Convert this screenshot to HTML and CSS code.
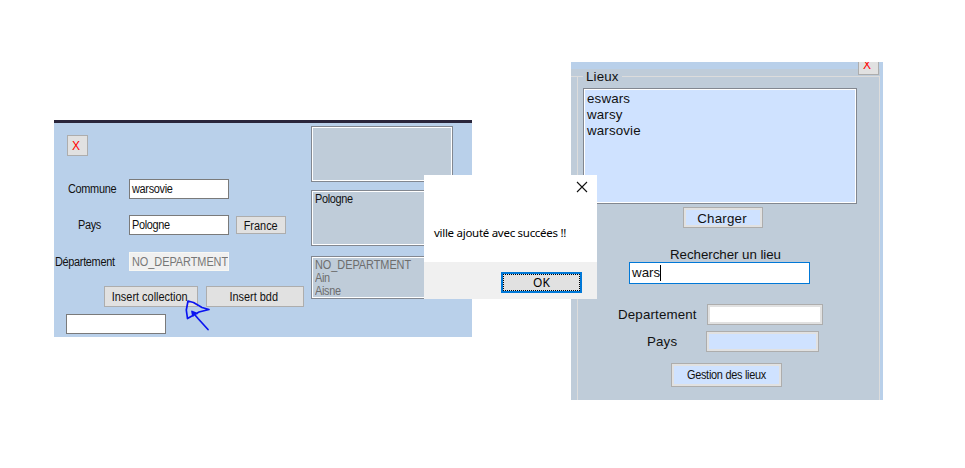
FILE: index.html
```html
<!DOCTYPE html>
<html lang="fr">
<head>
<meta charset="utf-8">
<title>Gestion des lieux</title>
<link rel="stylesheet" href="styles.css">
</head>
<body>
<main class="desktop">
  <section class="window editor">
    <div class="form">
      <button class="btn close">X</button>
      <div class="row commune"><label><span class="t">Commune</span></label><div class="field"><span class="t">warsovie</span></div></div>
      <div class="row pays"><label><span class="t">Pays</span></label><div class="field"><span class="t">Pologne</span></div><button class="btn france"><span class="t">France</span></button></div>
      <div class="row dept"><label><span class="t">Département</span></label><div class="field disabled"><span class="t caps">NO_DEPARTMENT</span></div></div>
      <div class="actions"><button class="btn collection"><span class="t">Insert collection</span></button><button class="btn bdd"><span class="t">Insert bdd</span></button></div>
      <div class="field extra"></div>
    </div>
    <div class="lists">
      <div class="list"></div>
      <div class="list"><div class="t">Pologne</div></div>
      <div class="list muted"><div class="t caps">NO_DEPARTMENT</div><div class="t">Ain</div><div class="t">Aisne</div></div>
    </div>
    <svg class="arrow" width="28" height="34" viewBox="184 298 28 34"><path d="M188 301L193.5 302.5L202 307.5L209 309.5L199 312L187.5 318.5L186.3 310L188 301M192 311.5L198 318.5L208 329.5M192 311.5L193 316M192 311.5L197 313.5"/></svg>
  </section>

  <section class="window places">
    <button class="btn close corner">X</button>
    <div class="panel">
      <fieldset class="group">
        <legend>Lieux</legend>
        <div class="results"><div>eswars</div><div>warsy</div><div>warsovie</div></div>
        <button class="flat load">Charger</button>
        <div class="search-label">Rechercher un lieu</div>
        <div class="search">wars<i class="caret"></i></div>
        <div class="info first"><span class="name">Departement</span><div class="flat value white"></div></div>
        <div class="info second"><span class="name">Pays</span><div class="flat value"></div></div>
        <button class="flat manage"><span class="t">Gestion des lieux</span></button>
      </fieldset>
    </div>
  </section>

  <section class="window dialog">
    <svg class="dismiss" width="12" height="12" viewBox="0 0 12 12"><path d="M1 1L11 11M11 1L1 11"/></svg>
    <p>ville ajouté avec succées !!</p>
    <footer><button class="ok"><span>OK</span></button></footer>
  </section>
</main>
</body>
</html>
```

FILE: styles.css
```css
* { box-sizing: border-box; }
body { margin: 0; background: #fff; font: 12px/14px "Liberation Sans", Arial, sans-serif; color: #111; }
button { font: inherit; color: inherit; padding: 0; margin: 0; border-radius: 0; white-space: nowrap; }
.desktop { position: relative; width: 965px; height: 468px; overflow: hidden; }
.window { position: absolute; }

/* Condensed interface text */
.t { display: inline-block; transform: scaleX(.91); transform-origin: left center; }
button .t { transform-origin: center; }

/* Editor window */
.editor { left: 54px; top: 120px; width: 418px; height: 217px; background: #b9d0ea; border-top: 3px solid #29253b; display: flex; letter-spacing: -0.35px; }
.form { width: 257px; flex: none; padding-top: 12px; }
.btn { display: block; background: #e1e1e1; border: 1px solid #adadad; text-align: center; }
.close { width: 21px; height: 21px; color: #f00; margin-left: 13px; padding-right: 3px; }
.row { display: flex; height: 20px; }
.row label { width: 75px; flex: none; line-height: 20px; white-space: nowrap; }
.commune { margin-top: 23px; }
.commune label { padding-left: 14px; }
.pays { margin-top: 16px; }
.pays label { padding-left: 24px; }
.dept { margin-top: 17px; height: 19px; }
.dept label { padding-left: 1px; }
.field { width: 100px; height: 20px; background: #fff; border: 1px solid #7a7a7a; padding-left: 2px; line-height: 18px; white-space: nowrap; overflow: hidden; }
.field.disabled { height: 19px; background: #f0f0f0; border-color: #f8f8f4; color: #777; line-height: 18px; }
.france { width: 50px; height: 18px; margin: 1px 0 0 7px; line-height: 18px; }
.actions { display: flex; gap: 8px; margin: 15px 0 0 50px; line-height: 20px; }
.actions .btn { height: 21px; }
.collection { width: 94px; padding-right: 2px; }
.bdd { width: 98px; padding-right: 2px; }
.extra { margin: 7px 0 0 12px; }
.lists { width: 142px; padding-top: 3px; }
.list { height: 56px; margin-bottom: 8px; background: #bfccd9; border: 1px solid #828790; box-shadow: inset 0 0 0 1px #fff; padding: 2px 3px; line-height: 13px; }
.list .t { display: block; }
.list + .list { margin-bottom: 10px; }
.list.muted { height: 43px; color: #6d6d6d; }
.caps { letter-spacing: -0.05px; }
.arrow { position: absolute; left: 130px; top: 175px; fill: none; stroke: #0a14f0; stroke-width: 1.7; stroke-linejoin: round; stroke-linecap: round; }

/* Places window */
.places { left: 571px; top: 62px; width: 312px; height: 338px; background: #b9d0ea; overflow: hidden; font-size: 13.33px; line-height: 16px; letter-spacing: .15px; padding-top: 7px; }
.corner { position: absolute; left: 287px; top: -8px; margin: 0; font-size: 12px; z-index: 1; }
.panel { width: 309px; height: 331px; background: #bfccd9; }
.group { margin: 0; padding: 0; border: 0; height: 331px; min-width: 0; background: linear-gradient(#dcdcdc, #dcdcdc) 6px 0 / 1px 324px no-repeat, linear-gradient(#dcdcdc, #dcdcdc) 308px 0 / 1px 324px no-repeat, linear-gradient(#dcdcdc, #dcdcdc) 0 0 / 309px 1px no-repeat; }
.group legend { margin-left: 12px; padding: 0 3px; height: 14px; line-height: 16px; background: #bfccd9; }
.results { width: 274px; height: 116px; margin: 5px 0 0 12px; background: #cfe2ff; border: 1px solid #828790; box-shadow: inset 0 0 0 1px #fff; padding: 2px 3px; }
.flat { display: block; background: #cfe2ff; border: 1px solid #adadad; box-shadow: inset 0 0 0 2px #e1e1e1; }
.load { width: 80px; height: 21px; margin: 3px 0 0 112px; padding-right: 2px; letter-spacing: .2px; line-height: 21px; }
.search-label { margin: 19px 0 0 99px; height: 15px; letter-spacing: -0.05px; }
.search { width: 181px; height: 22px; margin-left: 58px; background: #fff; border: 1px solid #0078d7; padding-left: 2px; display: flex; align-items: center; letter-spacing: 0; }
.caret { width: 1px; height: 16px; background: #000; }
.info { display: flex; align-items: center; height: 21px; }
.info.first { margin: 20px 0 0 47px; }
.info.second { margin: 6px 0 0 76px; }
.name { flex: none; width: 89px; }
.second .name { width: 59px; }
.value { width: 113px; height: 21px; }
.white { width: 116px; background: #fff; }
.manage { width: 111px; height: 24px; margin: 11px 0 0 100px; font-size: 12px; letter-spacing: -0.3px; }

/* Message dialog */
.dialog { left: 424px; top: 175px; width: 173px; height: 124px; background: #fff; display: flex; flex-direction: column; font: 12px/16px "Noto Sans", "Open Sans", sans-serif; color: #000; }
.dismiss { margin: 6px 0 0 152px; fill: none; stroke: #111; stroke-width: 1.1; flex: none; }
.dialog p { margin: 32px 0 0 10px; font-size: 11.5px; letter-spacing: -0.28px; white-space: nowrap; }
.dialog footer { height: 37px; margin-top: auto; background: #f0f0f0; padding: 10px 0 0 77px; }
.ok { display: block; width: 81px; height: 21px; border: 2px solid #0078d7; background: #e1e1e1; }
.ok span { display: block; height: 17px; border: 1px dotted #000; line-height: 15px; }
```
